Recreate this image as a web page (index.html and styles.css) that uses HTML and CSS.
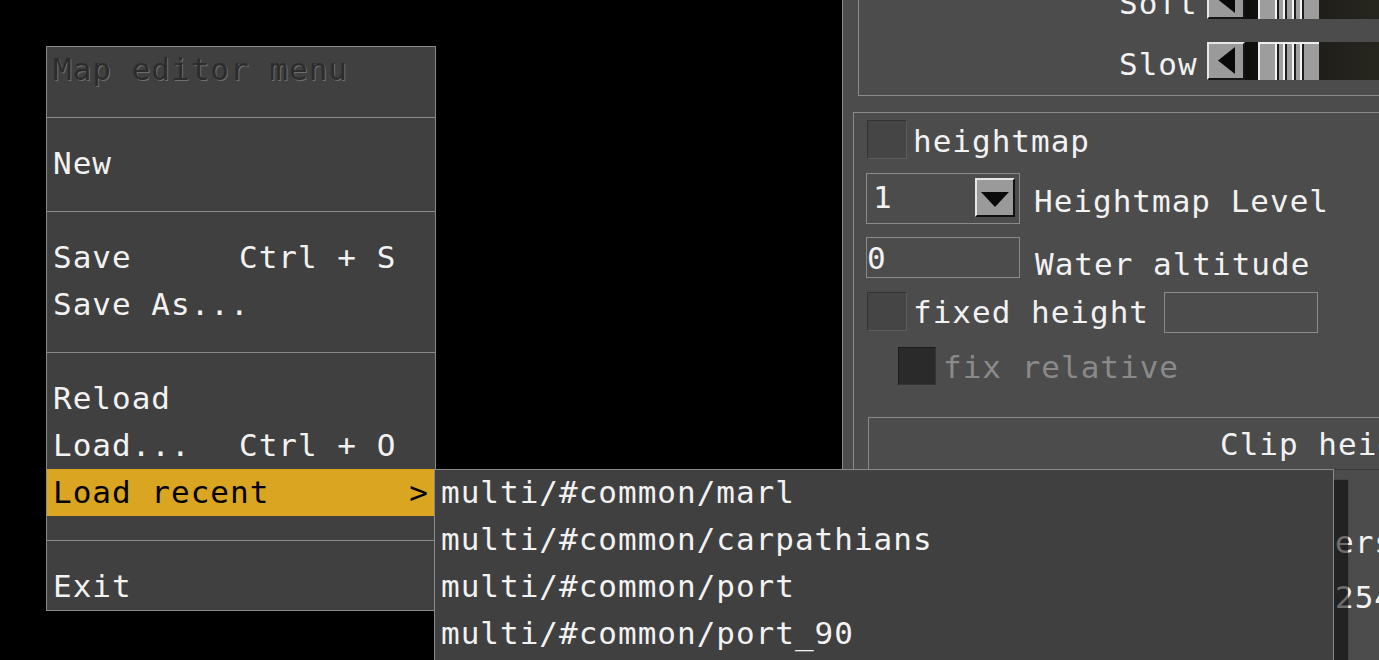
FILE: index.html
```html
<!DOCTYPE html>
<html>
<head>
<meta charset="utf-8">
<title>Map editor</title>
<link rel="stylesheet" href="styles.css">
</head>
<body>
<div class="screen">
  <div class="panel">
    <div class="box speed">
      <div class="srow">
        <span class="slabel">Soft</span>
        <div class="slider">
          <div class="sbtn"><svg width="34" height="34" viewBox="0 0 34 34"><polygon points="9,16.5 26,3 26,30" fill="#0a0a0a"/></svg></div>
          <div class="track"><div class="thumb"></div></div>
        </div>
      </div>
      <div class="srow">
        <span class="slabel">Slow</span>
        <div class="slider">
          <div class="sbtn"><svg width="34" height="34" viewBox="0 0 34 34"><polygon points="9,16.5 26,3 26,30" fill="#0a0a0a"/></svg></div>
          <div class="track"><div class="thumb"></div></div>
        </div>
      </div>
    </div>
    <div class="box terrain">
      <div class="row r1"><span class="check"></span><span class="lbl">heightmap</span></div>
      <div class="row r2">
        <div class="combo"><span class="val">1</span><span class="dbtn"><svg width="36" height="35" viewBox="0 0 36 35"><polygon points="4,12 32,12 18,27" fill="#0a0a0a"/></svg></span></div>
        <span class="lbl">Heightmap Level</span>
      </div>
      <div class="row r3"><div class="field">0</div><span class="lbl">Water altitude</span></div>
      <div class="row r4"><span class="check"></span><span class="lbl">fixed height</span><div class="field small"></div></div>
      <div class="row r5"><span class="check disabled"></span><span class="lbl dim">fix relative</span></div>
      <div class="clipbtn">Clip height</div>
      <div class="info">
        <div class="irow">Players</div>
        <div class="irow second">254</div>
      </div>
    </div>
  </div>

  <div class="menu">
    <div class="mi title">Map editor menu</div>
    <div class="sep"></div>
    <div class="mi">New</div>
    <div class="sep"></div>
    <div class="mi"><span class="ml">Save</span><span>Ctrl + S</span></div>
    <div class="mi">Save As...</div>
    <div class="sep"></div>
    <div class="mi">Reload</div>
    <div class="mi"><span class="ml">Load...</span><span>Ctrl + O</span></div>
    <div class="mi active"><span>Load recent</span><span>&gt;</span></div>
    <div class="sep"></div>
    <div class="mi">Exit</div>
  </div>

  <div class="submenu">
    <div class="si">multi/#common/marl</div>
    <div class="si">multi/#common/carpathians</div>
    <div class="si">multi/#common/port</div>
    <div class="si">multi/#common/port_90</div>
  </div>
</div>
</body>
</html>
```
FILE: styles.css
```css
* { box-sizing: border-box; }

body {
  margin: 0;
  background: #000;
  overflow: hidden;
  font-family: "DejaVu Sans Mono", monospace;
  font-size: 31px;
  letter-spacing: 1px;
  color: #f2f2f2;
}

.screen {
  position: relative;
  width: 1379px;
  height: 660px;
  overflow: hidden;
}

/* ---------- right tool panel ---------- */
.panel {
  position: absolute;
  left: 842px;
  top: -60px;
  width: 700px;
  height: 800px;
  background: #4c4c4c;
  border-left: 1px solid #8a8a8a;
}

.box { border: 1px solid #8a8a8a; }

.speed {
  margin-left: 15px;
  padding: 40px 0 15px 260px;
  display: flex;
  flex-direction: column;
  gap: 23px;
}

.srow { display: flex; height: 38px; }

.slabel {
  width: 88px;
  line-height: 38px;
  padding-top: 3px;
  white-space: pre;
}

.slider { display: flex; flex: 1; }

.sbtn {
  width: 38px;
  height: 38px;
  background: #9a9a9a;
  border-top: 2px solid #e6e6e6;
  border-left: 2px solid #e6e6e6;
  border-bottom: 2px solid #151515;
  border-right: 2px solid #151515;
}
.sbtn svg { display: block; }

.track {
  flex: 1;
  height: 38px;
  padding-left: 13px;
  background: linear-gradient(90deg, #0e0e0a 0%, #1d1c17 20%, #2c2b23 60%, #2e2d25 100%);
}

.thumb {
  width: 61px;
  height: 38px;
  border-top: 2px solid #eeeeee;
  border-left: 2px solid #eeeeee;
  background-color: #9d9d9d;
  background-image: linear-gradient(90deg,
    transparent 15px, #f4f4f4 15px, #f4f4f4 17px, #1c1c1c 17px, #1c1c1c 19px,
    transparent 19px, transparent 23px, #f4f4f4 23px, #f4f4f4 25px, #1c1c1c 25px, #1c1c1c 27px,
    transparent 27px, transparent 32px, #f4f4f4 32px, #f4f4f4 34px, #1c1c1c 34px, #1c1c1c 36px,
    transparent 36px, transparent 40px, #f4f4f4 40px, #f4f4f4 42px, #1c1c1c 42px, #1c1c1c 44px,
    transparent 44px);
}

.terrain {
  margin: 16px 0 0 10px;
  padding: 7px 0 0 13px;
  height: 700px;
}

.row { display: flex; align-items: flex-start; }

.lbl { line-height: 40px; white-space: pre; }
.lbl.dim { color: #8a8a8a; }

.check {
  width: 40px;
  height: 39px;
  background: #454545;
  border: 1px solid;
  border-color: #323232 #5c5c5c #5c5c5c #323232;
}
.check.disabled {
  width: 38px;
  height: 38px;
  background: #2a2a2a;
  border-color: #1c1c1c #353535 #353535 #1c1c1c;
}

.r1 { height: 39px; margin-bottom: 14px; }
.r1 .lbl { margin: 1px 0 0 6px; }

.r2 { height: 51px; margin-bottom: 13px; }
.combo {
  width: 154px;
  height: 51px;
  margin-left: -1px;
  border: 1px solid #8a8a8a;
  padding: 4px 4px 4px 6px;
  display: flex;
  justify-content: space-between;
}
.combo .val { line-height: 39px; }
.dbtn {
  width: 40px;
  height: 39px;
  background: #9a9a9a;
  border-top: 2px solid #e6e6e6;
  border-left: 2px solid #e6e6e6;
  border-bottom: 2px solid #111;
  border-right: 2px solid #111;
}
.dbtn svg { display: block; }
.r2 .lbl { margin: 8px 0 0 14px; }

.r3 { height: 41px; margin-bottom: 14px; }
.field {
  width: 154px;
  height: 41px;
  margin-left: -1px;
  border: 1px solid #8a8a8a;
  line-height: 39px;
  padding-top: 1px;
}
.r3 .lbl { margin: 7px 0 0 15px; }

.r4 { height: 41px; margin-bottom: 14px; }
.r4 .lbl { margin: 0 0 0 6px; }
.field.small { margin-left: 15px; }

.r5 { height: 38px; padding-left: 31px; margin-bottom: 32px; }
.r5 .lbl { margin: 0 0 0 7px; }

.clipbtn {
  margin-left: 1px;
  height: 53px;
  border: 1px solid #8a8a8a;
  border-bottom-color: #3a3a3a;
  padding: 6px 0 0 351px;
  line-height: 40px;
  white-space: pre;
}

.info { width: 527px; text-align: right; }
.irow { line-height: 40px; margin-top: 52px; }
.irow.second { margin-top: 15px; }

/* ---------- main menu ---------- */
.menu {
  position: absolute;
  left: 46px;
  top: 46px;
  width: 390px;
  height: 565px;
  background: #404040;
  box-shadow: inset 0 0 0 1px #8a8a8a;
}

.mi {
  height: 47px;
  line-height: 47px;
  padding-left: 7px;
  display: flex;
  white-space: pre;
}

.ml { width: 186px; }

.title {
  color: #2c2c2c;
  text-shadow: 1px 1px 0 #6e6e6e;
}

.sep { height: 47px; padding-top: 24px; }
.sep::before {
  content: "";
  display: block;
  height: 1px;
  background: #8a8a8a;
}

.active {
  background: #daa520;
  color: #000;
  margin: 0 1px;
  padding: 0 6px 0 6px;
  justify-content: space-between;
}

/* ---------- submenu ---------- */
.submenu {
  position: absolute;
  left: 434px;
  top: 469px;
  width: 900px;
  height: 200px;
  background: #404040;
  box-shadow: inset 0 0 0 1px #8a8a8a, 14px 11px 1px rgba(0, 0, 0, 0.55);
}

.si {
  height: 47px;
  line-height: 47px;
  padding-left: 7px;
  white-space: pre;
}
```
